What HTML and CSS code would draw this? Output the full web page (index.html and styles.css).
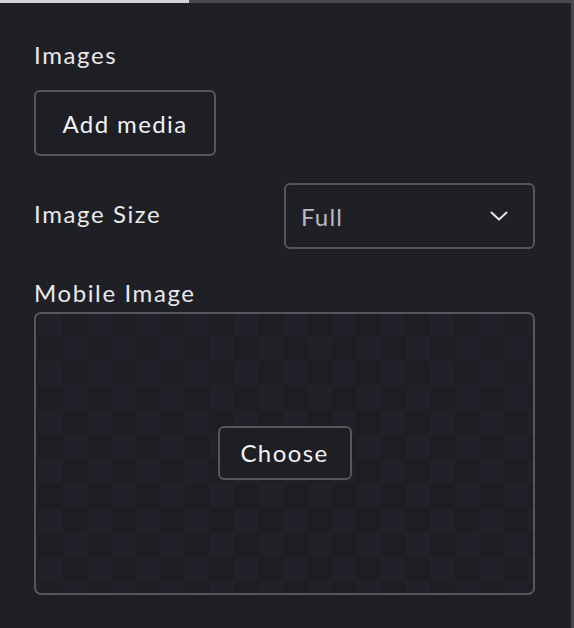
FILE: index.html
```html
<!DOCTYPE html>
<html>
<head>
<meta charset="utf-8">
<link rel="stylesheet" href="styles.css">
</head>
<body>
<div class="tabs">
  <div class="tab-active"></div>
  <div class="tab-rest"></div>
</div>
<div class="panel">
  <div class="label label-images">Images</div>
  <button class="btn btn-add">Add media</button>
  <div class="row">
    <div class="label">Image Size</div>
    <div class="select">
      <span class="select-value">Full</span>
      <svg class="chevron" width="18" height="10" viewBox="0 0 18 10"><path d="M1.5 1.5 L9 8.5 L16.5 1.5" fill="none" stroke="#e6e6e8" stroke-width="2" stroke-linecap="round" stroke-linejoin="round"/></svg>
    </div>
  </div>
  <div class="label label-mobile">Mobile Image</div>
  <div class="dropzone">
    <button class="btn btn-choose">Choose</button>
  </div>
</div>
</body>
</html>
```
FILE: styles.css
```css
html, body {
  margin: 0;
  padding: 0;
  background: #1f2026;
  height: 100%;
}
body {
  width: 574px;
  height: 628px;
  overflow: hidden;
  font-family: Lato, "Open Sans", sans-serif;
  color: #e9e9eb;
  display: flex;
  flex-direction: column;
}
.tabs {
  display: flex;
  height: 3px;
  flex: none;
}
.tab-active {
  width: 189px;
  background: #d3d3d7;
}
.tab-rest {
  flex: 1;
  background: #4a4b51;
}
.panel {
  flex: 1;
  border-right: 3px solid #46474c;
  padding: 0 36px 0 34px;
  display: flex;
  flex-direction: column;
}
.label {
  font-size: 24px;
  letter-spacing: 1.6px;
  line-height: 28px;
}
.label-images {
  margin-top: 38px;
}
.btn {
  font-family: Lato, "Open Sans", sans-serif;
  background: #1e1f24;
  color: #f2f2f3;
  border: 2px solid #56575d;
  border-radius: 6px;
  font-size: 24px;
  letter-spacing: 1.4px;
  padding: 0;
  cursor: pointer;
}
.btn-add {
  margin-top: 21px;
  width: 182px;
  height: 66px;
  align-self: flex-start;
}
.row {
  margin-top: 27px;
  display: flex;
  justify-content: space-between;
  align-items: flex-start;
}
.row .label {
  margin-top: 17px;
}
.select {
  width: 251px;
  height: 66px;
  box-sizing: border-box;
  border: 2px solid #56575d;
  border-radius: 6px;
  display: flex;
  align-items: center;
  justify-content: space-between;
  padding: 0 25px 0 15px;
}
.select-value {
  font-size: 24px;
  color: #b9babe;
  letter-spacing: 1.2px;
}
.chevron {
  margin-top: 0;
}
.label-mobile {
  margin-top: 30px;
}
.dropzone {
  margin-top: 5px;
  height: 283px;
  box-sizing: border-box;
  border: 2px solid #56575d;
  border-radius: 7px;
  display: flex;
  align-items: center;
  justify-content: center;
  background-color: #212229;
  background-image: conic-gradient(#1d1e22 25%, transparent 0 50%, #1d1e22 0 75%, transparent 0);
  background-size: 49px 49px;
  background-position: 2px -2px;
}
.btn-choose {
  width: 134px;
  height: 54px;
  font-size: 24px;
  background: #1e1f24;
  margin-top: -2px;
}
```
